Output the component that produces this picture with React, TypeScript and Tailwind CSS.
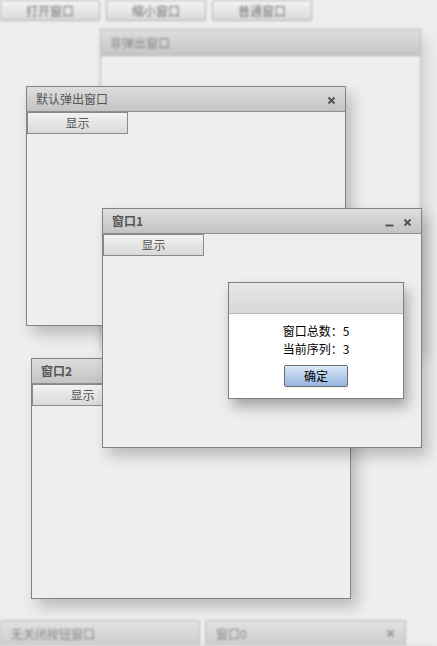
const font = "font-['Noto_Sans_CJK_SC','Noto_Sans',sans-serif]"

type WinProps = {
  title: string
  className: string
  close?: boolean
  min?: boolean
  bold?: boolean
  children?: React.ReactNode
}

function CloseIcon() {
  return (
    <svg width="9" height="9" viewBox="0 0 9 9" className="block">
      <path d="M1.5 1.5 L7.5 7.5 M7.5 1.5 L1.5 7.5" stroke="#555" strokeWidth="2" />
    </svg>
  )
}

function MinIcon() {
  return (
    <svg width="9" height="9" viewBox="0 0 9 9" className="block">
      <path d="M0.5 7.5 L8.5 7.5" stroke="#555" strokeWidth="2" />
    </svg>
  )
}

function Win({ title, className, close, min, bold, children }: WinProps) {
  return (
    <div
      className={`absolute flex flex-col border border-[#828282] bg-[#eeeeee] shadow-[6px_8px_14px_rgba(0,0,0,0.22)] ${className}`}
    >
      <div className="flex h-[25px] shrink-0 items-center border-b border-[#8e8e8e] bg-gradient-to-b from-[#dedede] to-[#c3c3c3] pl-[9px] pr-[9px]">
        <span className={`flex-1 text-[12px] text-[#555] ${bold ? 'font-bold' : ''}`}>{title}</span>
        <div className="flex items-center gap-[9px] pt-[2px]">
          {min && <MinIcon />}
          {close && <CloseIcon />}
        </div>
      </div>
      <div className="flex-1">{children}</div>
    </div>
  )
}

function ShowButton() {
  return (
    <button className="block h-[22px] w-[101px] border border-[#8a8a8a] bg-gradient-to-b from-[#f2f2f2] to-[#d9d9d9] text-[12px] text-[#555]">
      显示
    </button>
  )
}

function ToolButton({ label }: { label: string }) {
  return (
    <button className="h-[21px] w-[100px] rounded-[2px] border border-[#b4b4b4] bg-gradient-to-b from-[#f4f4f4] to-[#d9d9d9] text-[12px] text-[#777]">
      {label}
    </button>
  )
}

function TaskItem({ label, close, className }: { label: string; close?: boolean; className: string }) {
  return (
    <div
      className={`flex h-[26px] items-center rounded-t-[2px] border border-b-0 border-[#bbbbbb] bg-gradient-to-b from-[#e2e2e2] to-[#cdcdcd] px-[10px] ${className}`}
    >
      <span className="flex-1 text-[12px] text-[#888]">{label}</span>
      {close && (
        <svg width="9" height="9" viewBox="0 0 9 9">
          <path d="M1.5 1.5 L7.5 7.5 M7.5 1.5 L1.5 7.5" stroke="#999" strokeWidth="2" />
        </svg>
      )}
    </div>
  )
}

export default function App() {
  return (
    <div className={`flex h-[646px] w-[437px] flex-col overflow-hidden bg-[#eeeeee] ${font}`}>
      <div className="flex h-[21px] shrink-0 gap-[6px] blur-[0.8px]">
        <ToolButton label="打开窗口" />
        <ToolButton label="缩小窗口" />
        <ToolButton label="普通窗口" />
      </div>

      <div className="relative flex-1">
        <div className="absolute left-[100px] top-[8px] h-[320px] w-[321px] blur-[0.8px]">
          <div className="flex h-full flex-col border border-[#b8b8b8] bg-[#eeeeee] shadow-[6px_8px_14px_rgba(0,0,0,0.12)]">
            <div className="flex h-[26px] items-center border-b border-[#b0b0b0] bg-gradient-to-b from-[#dedede] to-[#c6c6c6] pl-[9px] text-[12px] text-[#888]">
              非弹出窗口
            </div>
          </div>
        </div>

        <Win title="默认弹出窗口" close className="left-[26px] top-[65px] h-[240px] w-[320px]">
          <ShowButton />
        </Win>

        <Win title="窗口2" bold className="left-[31px] top-[337px] h-[241px] w-[320px]">
          <ShowButton />
        </Win>

        <Win title="窗口1" bold min close className="left-[102px] top-[187px] h-[240px] w-[320px]">
          <ShowButton />
        </Win>

        <div className="absolute left-[228px] top-[261px] flex h-[117px] w-[176px] flex-col border border-[#7e7e7e] bg-white shadow-[4px_8px_12px_rgba(0,0,0,0.3)]">
          <div className="h-[31px] border-b border-[#b8b8b8] bg-gradient-to-b from-[#e6e6e6] to-[#d9d9d9]" />
          <div className="flex flex-1 flex-col items-center pt-[8px] text-[12px] leading-[18px] text-black">
            <div>窗口总数：5</div>
            <div>当前序列：3</div>
            <button className="mt-[7px] h-[22px] w-[64px] rounded-[2px] border border-[#6d6d6d] bg-gradient-to-b from-[#dbe8f8] to-[#93b6de] text-[12px] text-black">
              确定
            </button>
          </div>
        </div>
      </div>

      <div className="flex h-[26px] shrink-0 gap-[5px] border-b border-[#d8dccc] blur-[0.8px]">
        <TaskItem label="无关闭按钮窗口" className="w-[200px]" />
        <TaskItem label="窗口0" close className="w-[201px]" />
      </div>
    </div>
  )
}
